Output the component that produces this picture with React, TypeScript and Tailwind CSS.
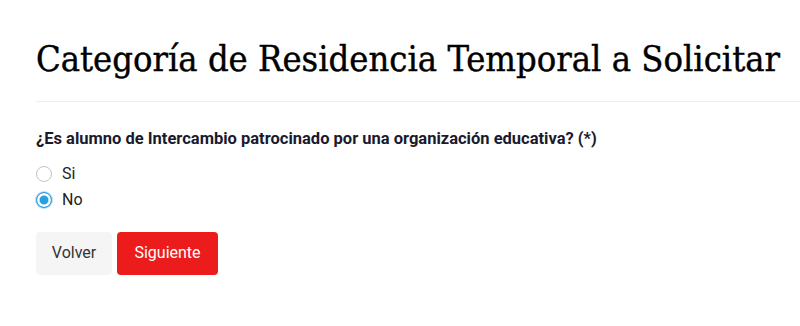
import { useState } from 'react'

export default function App() {
    const [value, setValue] = useState('no')

    return (
        <div className="min-h-[326px] bg-white pl-9 pt-[35px]" style={{ fontFamily: 'Roboto, sans-serif' }}>
            <h1
                className="text-[36px] leading-[48px] text-black whitespace-nowrap [-webkit-text-stroke:0.4px_black]"
                style={{ fontFamily: '"DejaVu Serif Condensed", "DejaVu Serif", serif' }}
            >
                Categoría de Residencia Temporal a Solicitar
            </h1>
            <hr className="mt-[18px] border-t border-[#eeeeee]" />

            <p className="mt-[25px] text-[16.5px] font-bold text-[#1a1a2e]">
                ¿Es alumno de Intercambio patrocinado por una organización educativa? (*)
            </p>

            <div className="mt-[12px] flex flex-col gap-[6px]">
                {[
                    { id: 'si', label: 'Si' },
                    { id: 'no', label: 'No' },
                ].map((opt) => (
                    <label key={opt.id} className="flex items-center gap-[10px] text-[16px] text-[#222] leading-5">
                        <input
                            type="radio"
                            name="intercambio"
                            checked={value === opt.id}
                            onChange={() => setValue(opt.id)}
                            className="appearance-none h-4 w-4 m-0 rounded-full border border-[#c4c4c4] bg-white checked:border-[#2a9fe0] checked:bg-[#2a9fe0] checked:shadow-[inset_0_0_0_2.5px_white,0_0_0_1px_#bfe0f5]"
                        />
                        {opt.label}
                    </label>
                ))}
            </div>

            <div className="mt-[22px] flex gap-[5px]">
                <button className="h-[43px] w-[76px] rounded bg-[#f5f5f5] text-[16px] text-[#333]">Volver</button>
                <button className="h-[43px] w-[101px] rounded bg-[#ec1c1c] text-[16px] text-white">Siguiente</button>
            </div>
        </div>
    )
}
